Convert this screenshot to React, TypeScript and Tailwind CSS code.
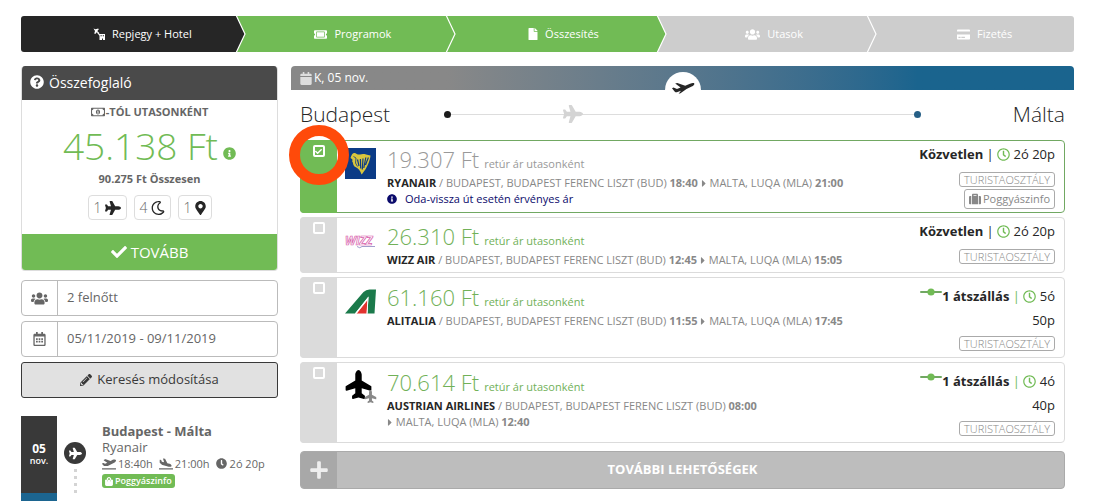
import React, { useState } from "react";
import {
  FaCalendar,
  FaCaretRight,
  FaCheck,
  FaClock,
  FaCreditCard,
  FaFile,
  FaInfoCircle,
  FaMapMarkerAlt,
  FaPencilAlt,
  FaPlane,
  FaPlaneArrival,
  FaPlaneDeparture,
  FaPlus,
  FaQuestionCircle,
  FaRegCalendarAlt,
  FaRegClock,
  FaRegMoneyBillAlt,
  FaRegMoon,
  FaShoppingBag,
  FaSuitcase,
  FaTicketAlt,
  FaUsers,
} from "react-icons/fa";

function PlaneHotelIcon() {
  return (
    <svg viewBox="0 0 24 24" className="h-3 w-3" fill="currentColor" aria-hidden="true">
      <path d="M1 1 5 2.500 10.500 1 11.500 3 8.500 6 12.500 10 11 11.500 7.500 8.500 4.500 12 2.500 11 4 6Z" />
      <path d="M10 9 15 13.500 13.500 15.500 9 11Z" />
      <path d="M13 12H24V24H20V21H18V24H13ZM15 14.500V16.500H17.500V14.500ZM19.500 14.500V16.500H22V14.500Z" fillRule="evenodd" />
    </svg>
  );
}

type Tone = "dark" | "green" | "gray";

const toneBg: Record<Tone, string> = {
  dark: "bg-[#262626]",
  green: "bg-[#71bb55]",
  gray: "bg-[#cdcdcd]",
};
const toneFill: Record<Tone, string> = {
  dark: "fill-[#262626]",
  green: "fill-[#71bb55]",
  gray: "fill-[#cdcdcd]",
};

const steps: { label: string; tone: Tone; icon: React.ReactNode }[] = [
  { label: "Repjegy + Hotel", tone: "dark", icon: <PlaneHotelIcon /> },
  { label: "Programok", tone: "green", icon: <FaTicketAlt className="h-[13px] w-[13px]" /> },
  { label: "Összesítés", tone: "green", icon: <FaFile className="h-3 w-[10px]" /> },
  { label: "Utasok", tone: "gray", icon: <FaUsers className="h-[15px] w-[15px]" /> },
  { label: "Fizetés", tone: "gray", icon: <FaCreditCard className="h-[13px] w-[13px]" /> },
];

function Steps() {
  return (
    <ol className="flex h-9 overflow-hidden rounded-[3px]">
      {steps.map((s, i) => (
        <li
          key={s.label}
          className={`relative flex flex-1 items-center justify-center gap-[7px] pl-8 text-[11px] text-white ${toneBg[s.tone]}`}
        >
          {s.icon}
          <a href="#">{s.label}</a>
          {i < steps.length - 1 && (
            <svg viewBox="0 0 15 36" className="absolute left-full top-0 z-10 h-9 w-[15px]" aria-hidden="true">
              <path d="M-1 -1H4L13 18 4 37H-1Z" className={toneFill[s.tone]} />
              <path d="M4 -1 13 18 4 37" fill="none" stroke="#fff" strokeWidth="1.2" />
            </svg>
          )}
        </li>
      ))}
    </ol>
  );
}

function Summary() {
  return (
    <section className="overflow-hidden rounded-[4px] border border-[#ddd] border-t-0">
      <h2 className="-mx-px flex h-[34px] items-center gap-[5px] bg-[#4a4a4a] px-[9px] pb-[2px] text-[14px] text-white">
        <FaQuestionCircle className="h-[14px] w-[14px]" />
        Összefoglaló
      </h2>
      <div className="flex flex-col items-center pt-1 pb-[14px] text-[#666]">
        <p className="flex items-center gap-px text-[11px] leading-4 font-bold">
          <FaRegMoneyBillAlt className="h-[14px] w-[14px]" />
          -TÓL UTASONKÉNT
        </p>
        <p className="flex items-baseline gap-[5px] text-[37px] leading-[51px] font-light text-[#71bb55]">
          45.138 Ft
          <FaInfoCircle className="h-[13px] w-[13px]" />
        </p>
        <p className="text-[11px] leading-4 font-bold">90.275 Ft Összesen</p>
        <ul className="mt-2 flex h-[25px] gap-[7px] text-[14px] font-light">
          <li className="flex items-center gap-[3px] rounded-[4px] border border-[#ddd] px-[5px]">
            1 <FaPlane className="h-4 w-4 text-[#262626]" />
          </li>
          <li className="flex items-center gap-[3px] rounded-[4px] border border-[#ddd] px-[5px]">
            4 <FaRegMoon className="h-[14px] w-[14px] text-[#262626]" />
          </li>
          <li className="flex items-center gap-[3px] rounded-[4px] border border-[#ddd] px-[5px]">
            1 <FaMapMarkerAlt className="h-[14px] w-[11px] text-[#262626]" />
          </li>
        </ul>
      </div>
      <button type="button" className="flex h-9 w-full items-center justify-center gap-1 bg-[#71bb55] text-[15px] text-white">
        <FaCheck className="h-4 w-4" />
        TOVÁBB
      </button>
    </section>
  );
}

function SearchField({ id, label, value, icon }: { id: string; label: string; value: string; icon: React.ReactNode }) {
  return (
    <div className="flex h-9 rounded-[4px] border border-[#bbb]">
      <label htmlFor={id} className="flex w-9 shrink-0 items-center justify-center border-r border-[#bbb] text-[#666]">
        {icon}
      </label>
      <input
        id={id}
        aria-label={label}
        readOnly
        value={value}
        className="w-full min-w-0 bg-transparent px-[9px] text-[13px] text-[#666] outline-none"
      />
    </div>
  );
}

function Itinerary() {
  return (
    <section className="mt-[18px] flex text-[#666]">
      <div className="flex w-9 shrink-0 flex-col text-center text-white">
        <div className="flex h-[77px] flex-col items-center justify-center bg-[#393939]">
          <b className="text-[12px] leading-3">05</b>
          <span className="text-[9px] leading-3 font-semibold">nov.</span>
        </div>
        <div className="h-[9px] bg-[#1c6590]" />
      </div>
      <div className="ml-[7px] flex w-[22px] shrink-0 flex-col items-center gap-1 pt-[26px]">
        <span className="mb-px flex h-[22px] w-[22px] items-center justify-center rounded-full bg-[#393939]">
          <FaPlane className="h-[13px] w-[13px] text-white" />
        </span>
        <span className="h-[3px] w-[3px] bg-[#d4d4d4]" />
        <span className="h-[3px] w-[3px] bg-[#d4d4d4]" />
        <span className="h-[3px] w-[3px] bg-[#d4d4d4]" />
        <span className="h-[3px] w-[3px] bg-[#d4d4d4]" />
      </div>
      <div className="ml-4 pt-[7px]">
        <h3 className="text-[13px] leading-4 font-bold">Budapest - Málta</h3>
        <p className="text-[13px] leading-4">Ryanair</p>
        <p className="flex items-center gap-[6px] text-[11px] leading-[17px] whitespace-nowrap">
          <span className="flex items-center gap-[2px]">
            <FaPlaneDeparture className="h-[14px] w-[14px]" />
            18:40h
          </span>
          <span className="flex items-center gap-[2px]">
            <FaPlaneArrival className="h-[14px] w-[14px]" />
            21:00h
          </span>
          <span className="flex items-center gap-[3px]">
            <FaClock className="h-[11px] w-[11px]" />
            2ó 20p
          </span>
        </p>
        <a
          href="#"
          className="mt-[2px] flex h-[14px] w-fit items-center gap-[2px] rounded-[3px] bg-[#71bb55] px-[3px] text-[9px] font-semibold text-white"
        >
          <FaShoppingBag className="h-[9px] w-[8px]" />
          Poggyászinfo
        </a>
      </div>
    </section>
  );
}

function RyanairLogo() {
  return (
    <svg viewBox="0 0 31 31" className="h-[31px] w-[31px]" role="img" aria-label="Ryanair">
      <rect width="31" height="31" fill="#0b3b86" />
      <path
        d="M5.500 10C6.500 6.500 8 4.500 10 5C11.500 5.500 12.500 7 15 6.500C18 5.500 20 6 25.500 7.500C25 13 22 20 17.500 25.500L16.500 26.500C15.500 23 13.500 20 9.500 18.500C7.500 16.500 8.500 14.500 7 13C8.500 12 7 11 5.500 10Z"
        fill="#d8c53d"
      />
      <path
        d="M12.500 11.500 14 18M15.400 11 15.700 20.500M18 10.500 17.300 21.500M20.800 9.500 18.800 20M23.400 9.500 20.500 17"
        stroke="#0b3b86"
        strokeWidth="1.200"
      />
      <path d="M8.500 8.500 11 10 10.500 15 12.500 18.500" stroke="#0b3b86" strokeWidth=".8" fill="none" />
    </svg>
  );
}

function WizzLogo() {
  return (
    <svg viewBox="0 0 33 18" className="h-[18px] w-[33px]" role="img" aria-label="Wizz Air">
      <text
        x="0"
        y="13"
        fontFamily="Open Sans, sans-serif"
        fontSize="12"
        fontWeight="700"
        fontStyle="italic"
        fill="#fff"
        stroke="#d860ab"
        strokeWidth=".7"
      >
        WIZZ
      </text>
      <path d="M12 14.500Q15 17 17 14.500H30" fill="none" stroke="#7a74b4" strokeWidth=".7" />
    </svg>
  );
}

function AlitaliaLogo() {
  return (
    <svg viewBox="0 0 31 25" className="h-[25px] w-[31px]" role="img" aria-label="Alitalia">
      <path d="M0 24.500 18.500 3Q21 .5 24.500.5H31L29.500 24.500H22.500L23.500 7.500 10 24.500Z" fill="#1b7a4b" />
      <path d="M22.500 10.500 21.500 24.500H11.500Z" fill="#e2332f" />
      <path d="M23.500 7.500 10 24.500H11.800L22.600 11 21.700 24.500H22.500Z" fill="#fff" />
    </svg>
  );
}

function MultiPlaneLogo() {
  return (
    <span className="relative block h-[33px] w-8">
      <FaPlane className="absolute -left-px top-0 h-[29px] w-[29px] -rotate-90 text-black" />
      <FaPlane className="absolute bottom-0 right-0 h-[13px] w-[13px] -rotate-90 text-[#888]" />
    </span>
  );
}

type Flight = {
  airline: string;
  price: string;
  depart: string;
  arrive: string;
  duration: string;
  transfer: boolean;
  note?: string;
  baggage?: boolean;
  logo: React.ReactNode;
  logoPad: string;
};

const flights: Flight[] = [
  {
    airline: "RYANAIR",
    price: "19.307 Ft",
    depart: "18:40",
    arrive: "21:00",
    duration: "2ó 20p",
    transfer: false,
    note: "Oda-vissza út esetén érvényes ár",
    baggage: true,
    logo: <RyanairLogo />,
    logoPad: "pt-[7px]",
  },
  {
    airline: "WIZZ AIR",
    price: "26.310 Ft",
    depart: "12:45",
    arrive: "15:05",
    duration: "2ó 20p",
    transfer: false,
    logo: <WizzLogo />,
    logoPad: "pt-[14px]",
  },
  {
    airline: "ALITALIA",
    price: "61.160 Ft",
    depart: "11:55",
    arrive: "17:45",
    duration: "5ó 50p",
    transfer: true,
    logo: <AlitaliaLogo />,
    logoPad: "pt-[11px]",
  },
  {
    airline: "AUSTRIAN AIRLINES",
    price: "70.614 Ft",
    depart: "08:00",
    arrive: "12:40",
    duration: "4ó 40p",
    transfer: true,
    logo: <MultiPlaneLogo />,
    logoPad: "pt-[7px]",
  },
];

function FlightCard({ flight: f, selected, onToggle }: { flight: Flight; selected: boolean; onToggle: () => void }) {
  return (
    <li className={`relative flex rounded-[4px] border ${selected ? "border-[#71a862]" : "border-[#dbdbdb]"}`}>
      <label
        className={`-my-px -ml-px flex w-[37px] shrink-0 justify-center rounded-l-[4px] pt-[5px] text-white ${selected ? "bg-[#71bb55]" : "bg-[#dbdbdb]"}`}
      >
        <span className="grid h-3 w-3">
          <input
            type="checkbox"
            aria-label={f.airline}
            checked={selected}
            onChange={onToggle}
            className="col-start-1 row-start-1 h-3 w-3 appearance-none rounded-[2px] border-2 border-white"
          />
          {selected && <FaCheck className="pointer-events-none col-start-1 row-start-1 m-auto h-[7px] w-[7px]" />}
        </span>
      </label>
      <div className={`flex w-[50px] shrink-0 pl-2 ${f.logoPad}`}>{f.logo}</div>
      <div className={`min-w-0 flex-1 pb-1 text-[#888] ${f.transfer ? "pt-[3px]" : "pt-[2px]"}`}>
        <p
          className={`flex h-8 items-baseline gap-[5px] text-[11px] leading-8 ${selected ? "text-[#999]" : "text-[#71b158]"}`}
        >
          <span className="text-[22px] font-light">{f.price}</span> retúr ár utasonként
        </p>
        <p className="text-[11px] leading-4">
          <b className="text-[#262626]">{f.airline}</b> / BUDAPEST, BUDAPEST FERENC LISZT (BUD) <b>{f.depart}</b>{" "}
          <span className="inline-block">
            <FaCaretRight className="mb-px inline h-[11px] w-[6px]" /> MALTA, LUQA (MLA) <b>{f.arrive}</b>
          </span>
        </p>
        {f.note && (
          <p className="flex items-center gap-2 text-[11px] leading-4 text-[#0a0a6b]">
            <FaInfoCircle className="h-[10px] w-[10px]" />
            {f.note}
          </p>
        )}
      </div>
      <div
        className={`flex w-[180px] shrink-0 flex-col items-end pr-[9px] text-right text-[13px] text-[#262626] ${f.transfer ? "pt-[6px] pb-[6px] leading-6" : "pt-[3px] pb-[3px] leading-5"}`}
      >
        <p className="max-w-[140px]">
          {f.transfer && (
            <svg viewBox="0 0 22 8" className="mb-[5px] inline h-2 w-[22px] align-baseline" aria-hidden="true">
              <path d="M1 4H21" stroke="#71a862" strokeWidth="2" strokeLinecap="round" />
              <circle cx="11" cy="4" r="3.600" fill="#71bb55" />
            </svg>
          )}
          <b>{f.transfer ? "1 átszállás" : "Közvetlen"}</b>{" "}
          <span className={f.transfer ? "text-[#71bb55]" : ""}>|</span>{" "}
          <FaRegClock className="mb-[2px] inline h-[13px] w-[13px] text-[#71bb55]" /> {f.duration}
        </p>
        <span
          className={`rounded-[3px] border border-[#aaa] px-1 text-[11px] leading-[13px] font-light text-[#888] ${f.transfer ? "mt-1" : "mt-2"}`}
        >
          TURISTAOSZTÁLY
        </span>
        {f.baggage && (
          <a
            href="#"
            className="mt-[2px] flex h-5 items-center gap-[2px] rounded-[3px] border border-[#aaa] px-1 text-[11px] text-[#888]"
          >
            <FaSuitcase className="h-3 w-3" />
            Poggyászinfo
          </a>
        )}
      </div>
      {selected && (
        <span className="pointer-events-none absolute -left-3 -top-4 z-10 h-[60px] w-[60px] rounded-full border-[11px] border-[#ff4a0a]" />
      )}
    </li>
  );
}

function Results() {
  const [selected, setSelected] = useState("RYANAIR");
  return (
    <main className="min-w-0 flex-1">
      <div className="relative flex h-6 items-center gap-[2px] rounded-t-[4px] bg-linear-to-r from-[#888] from-20% to-[#1a648e] to-80% px-[9px] text-[12px] text-white">
        <FaCalendar className="h-[13px] w-3 text-[#ddd]" />
        K, 05 nov.
        <span className="absolute left-1/2 top-[6px] flex h-9 w-9 -translate-x-1/2 items-start justify-center rounded-full bg-white pt-1 text-[#262626]">
          <svg viewBox="0 0 24 12" className="mt-[6px] h-3 w-6" aria-hidden="true">
            <path
              fill="currentColor"
              d="M1 6.300 2.500 5.600 6 7 9.600 5.600 4.200 1.600 6.300.9 14.200 3.800 19 1.700C21 .9 22.800.7 23.300 1.500 23.800 2.500 22.500 3.800 20.700 4.600L15.500 6.900 9.500 11.300 7.600 11.800 10 8.800 6.500 10.100C5.300 10.500 4.500 10.400 3.800 9.700Z"
            />
          </svg>
        </span>
      </div>
      <div className="grid grid-cols-[1fr_3fr_1fr] items-center pt-[9px] text-[21px] leading-[30px] font-light text-[#262626]">
        <span className="pl-[9px]">Budapest</span>
        <div className="relative -mx-[4px] flex items-center">
          <span className="h-[7px] w-[7px] rounded-full bg-[#1c1c1c]" />
          <span className="h-px flex-1 bg-[#ddd]" />
          <span className="h-[7px] w-[7px] rounded-full bg-[#265f86]" />
          <FaPlane className="absolute left-1/4 h-5 w-5 text-[#d4d4d4]" />
        </div>
        <span className="pr-[9px] text-right">Málta</span>
      </div>
      <div className="px-[9px] pt-[11px]">
        <ul className="flex flex-col gap-1">
          {flights.map((f) => (
            <FlightCard
              key={f.airline}
              flight={f}
              selected={selected === f.airline}
              onToggle={() => setSelected(selected === f.airline ? "" : f.airline)}
            />
          ))}
        </ul>
        <button
          type="button"
          className="mt-2 flex h-[38px] w-full items-center overflow-hidden rounded-[4px] border border-[#aaa] bg-[#bdbdbd] text-[13px] font-bold text-white"
        >
          <span className="flex h-full w-9 items-center justify-center bg-[#a8a8a8]">
            <FaPlus className="h-5 w-5 text-[#eee]" />
          </span>
          <span className="flex-1 pr-9">TOVÁBBI LEHETŐSÉGEK</span>
        </button>
      </div>
    </main>
  );
}

export default function App() {
  return (
    <div className="bg-white pt-4 pr-[29px] pl-[21px] font-['Open_Sans','Noto_Sans',sans-serif]">
      <Steps />
      <div className="mt-[14px] flex items-start gap-[13px]">
        <aside className="w-[257px] shrink-0">
          <Summary />
          <div className="mt-[9px] flex flex-col gap-[5px]">
            <SearchField id="guests" label="Utasok" value="2 felnőtt" icon={<FaUsers className="h-[17px] w-[17px]" />} />
            <SearchField
              id="dates"
              label="Dátum"
              value="05/11/2019 - 09/11/2019"
              icon={<FaRegCalendarAlt className="h-[14px] w-[13px]" />}
            />
            <button
              type="button"
              className="flex h-9 items-center justify-center gap-[5px] rounded-[3px] border border-[#393939] bg-[#e1e1e1] text-[13px] text-[#393939]"
            >
              <FaPencilAlt className="h-3 w-3" />
              Keresés módosítása
            </button>
          </div>
          <Itinerary />
        </aside>
        <Results />
      </div>
    </div>
  );
}
